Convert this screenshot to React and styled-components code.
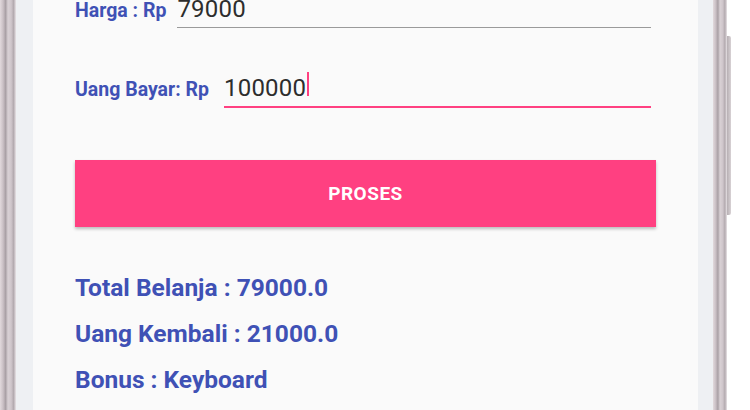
import styled, { createGlobalStyle } from "styled-components";

const GlobalStyle = createGlobalStyle`
  html, body {
    margin: 0;
    padding: 0;
    background: #ffffff;
    overflow: hidden;
  }
  body {
    font-family: Roboto, "Liberation Sans", sans-serif;
  }
`;

const Frame = styled.div`
  display: flex;
  width: 750px;
  height: 410px;
  background: #ffffff;
`;

const Bezel = styled.div`
  width: ${(p) => p.$width}px;
  flex-shrink: 0;
  background: linear-gradient(
    to right,
    #e2dadd 0%,
    #c9bfc4 20%,
    #a9a0a5 35%,
    #d9d1d5 50%,
    #cfc6cb 70%,
    #b3aaaf 85%,
    #e9e4e7 100%
  );
`;

const Edge = styled.div`
  width: ${(p) => p.$width}px;
  flex-shrink: 0;
  background: #eef0f3;
`;

const SideArea = styled.div`
  width: 23px;
  flex-shrink: 0;
  padding-top: 36px;
`;

const SideButton = styled.div`
  width: 4px;
  height: 179px;
  background: linear-gradient(to right, #b7afb3, #d8d2d5);
  border-radius: 0 2px 2px 0;
`;

const Screen = styled.div`
  flex: 1;
  background: #fafafa;
  padding: 0 42px;
  display: flex;
  flex-direction: column;
`;

const FieldRow = styled.div`
  display: flex;
  align-items: baseline;
  gap: ${(p) => p.$gap}px;
  margin-top: ${(p) => p.$top}px;
  margin-right: 5px;
`;

const Label = styled.div`
  color: #3f51b5;
  font-weight: 700;
  font-size: 19.5px;
  white-space: nowrap;
`;

const Field = styled.div`
  flex: 1;
  display: flex;
  align-items: baseline;
  padding-bottom: 5px;
  border-bottom: ${(p) => (p.$active ? "2px solid #ff4081" : "1.5px solid #9a9a9a")};
  font-size: 24px;
  line-height: 26px;
  color: #2d2d2d;
  letter-spacing: 0.2px;
`;

const Cursor = styled.span`
  display: inline-block;
  width: 2px;
  height: 24px;
  background: #ff4081;
  margin-left: 1px;
  margin-bottom: -6px;
`;

const ProsesButton = styled.button`
  margin-top: 52px;
  height: 67px;
  border: none;
  background: #ff4081;
  color: #ffffff;
  font-family: Roboto, "Liberation Sans", sans-serif;
  font-weight: 700;
  font-size: 19px;
  letter-spacing: 0.5px;
  box-shadow: 0 2px 3px rgba(0, 0, 0, 0.25);
`;

const Results = styled.div`
  margin-top: 46px;
  display: flex;
  flex-direction: column;
  gap: 16px;
`;

const ResultLine = styled.div`
  color: #3f51b5;
  font-weight: 700;
  font-size: 24.5px;
  line-height: 30px;
`;

export default function App() {
  return (
    <>
      <GlobalStyle />
      <Frame>
        <Bezel $width={16} />
        <Edge $width={17} />
        <Screen>
          <FieldRow $gap={11} $top={-4}>
            <Label>Harga : Rp</Label>
            <Field>79000</Field>
          </FieldRow>
          <FieldRow $gap={15} $top={44}>
            <Label>Uang Bayar: Rp</Label>
            <Field $active>
              100000
              <Cursor />
            </Field>
          </FieldRow>
          <ProsesButton>PROSES</ProsesButton>
          <Results>
            <ResultLine>Total Belanja : 79000.0</ResultLine>
            <ResultLine>Uang Kembali : 21000.0</ResultLine>
            <ResultLine>Bonus : Keyboard</ResultLine>
          </Results>
        </Screen>
        <Edge $width={15} />
        <Bezel $width={14} />
        <SideArea>
          <SideButton />
        </SideArea>
      </Frame>
    </>
  );
}
